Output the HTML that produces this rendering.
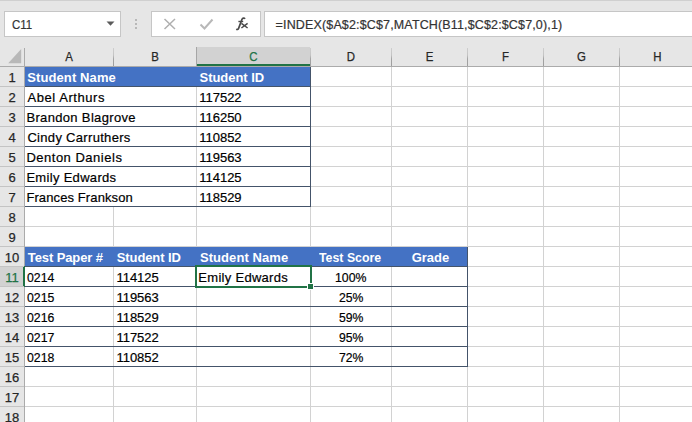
<!DOCTYPE html>
<html><head><meta charset="utf-8"><style>
html,body{margin:0;padding:0;}
body{width:692px;height:422px;overflow:hidden;position:relative;background:#E6E6E6;font-family:"Liberation Sans", sans-serif;}
body>div,body>svg{position:absolute;}
.t{white-space:nowrap;}
</style></head><body>
<div style="left:0px;top:0px;width:692px;height:1px;background:#D0D0D0"></div>
<div style="left:4px;top:11px;width:117px;height:26px;background:#fff;border:1px solid #C6C6C6;box-sizing:border-box"></div>
<svg style="position:absolute;left:106px;top:21px" width="9" height="6"><path d="M0.5 0.5 L8.5 0.5 L4.5 4.8 Z" fill="#5a5a5a"/></svg>
<div style="left:135px;top:19px;width:2px;height:2px;background:#A8A8A8;border-radius:1px"></div>
<div style="left:135px;top:23px;width:2px;height:2px;background:#A8A8A8;border-radius:1px"></div>
<div style="left:135px;top:27px;width:2px;height:2px;background:#A8A8A8;border-radius:1px"></div>
<div style="left:151px;top:11px;width:110px;height:26px;background:#fff;border:1px solid #C6C6C6;box-sizing:border-box"></div>
<svg style="position:absolute;left:163px;top:18px" width="14" height="12"><path d="M1.5 1 L12 11 M12 1 L1.5 11" stroke="#AFAFAF" stroke-width="1.5" fill="none"/></svg>
<svg style="position:absolute;left:199px;top:18px" width="15" height="13"><path d="M1.5 6.5 L5.5 10.5 L13.5 1.5" stroke="#B8B8B8" stroke-width="2" fill="none"/></svg>
<svg style="position:absolute;left:234px;top:16px" width="16" height="15"><path d="M11 2.9 C10.4 1.9 8.6 1.7 7.9 3.5 L4.6 12.4 C4.1 13.5 3.2 13.7 2.2 13.2" stroke="#4a4a4a" stroke-width="1.7" fill="none"/><path d="M4.4 5.5 L9.2 5.5" stroke="#4a4a4a" stroke-width="1.4"/><path d="M7.4 7.4 L13.6 12 M13.6 7.4 L7.4 12" stroke="#4a4a4a" stroke-width="1.5"/></svg>
<div style="left:264px;top:11px;width:440px;height:26px;background:#fff;border:1px solid #C6C6C6;box-sizing:border-box"></div>
<div style="left:0px;top:47px;width:692px;height:19px;background:#E6E6E6"></div>
<svg style="position:absolute;left:8px;top:49px" width="14" height="15"><path d="M13.2 0 L13.2 14.2 L0.2 14.2 Z" fill="#B8B8B8"/></svg>
<div style="left:197px;top:47px;width:113px;height:19px;background:#D2D2D2"></div>
<div style="left:113px;top:48px;width:1px;height:18px;background:linear-gradient(#CDCDCD,#C4C4C4 40%,#A3A3A3 60%,#9E9E9E)"></div>
<div style="left:196px;top:47px;width:1px;height:19px;background:#A6A6A6"></div>
<div style="left:310px;top:48px;width:1px;height:18px;background:linear-gradient(#CDCDCD,#C4C4C4 40%,#A3A3A3 60%,#9E9E9E)"></div>
<div style="left:391px;top:48px;width:1px;height:18px;background:linear-gradient(#CDCDCD,#C4C4C4 40%,#A3A3A3 60%,#9E9E9E)"></div>
<div style="left:467px;top:48px;width:1px;height:18px;background:linear-gradient(#CDCDCD,#C4C4C4 40%,#A3A3A3 60%,#9E9E9E)"></div>
<div style="left:543px;top:48px;width:1px;height:18px;background:linear-gradient(#CDCDCD,#C4C4C4 40%,#A3A3A3 60%,#9E9E9E)"></div>
<div style="left:619px;top:48px;width:1px;height:18px;background:linear-gradient(#CDCDCD,#C4C4C4 40%,#A3A3A3 60%,#9E9E9E)"></div>
<div style="left:695px;top:48px;width:1px;height:18px;background:linear-gradient(#CDCDCD,#C4C4C4 40%,#A3A3A3 60%,#9E9E9E)"></div>
<div style="left:0px;top:66px;width:692px;height:1px;background:#ABABAB"></div>
<div style="left:197px;top:64px;width:113px;height:2px;background:#217346"></div>
<div class="t" style="left:25px;top:47px;width:88px;text-align:center;font-size:13px;line-height:19px;color:#262626;-webkit-text-stroke:0.25px #262626;transform:scaleX(0.88)">A</div>
<div class="t" style="left:114px;top:47px;width:82px;text-align:center;font-size:13px;line-height:19px;color:#262626;-webkit-text-stroke:0.25px #262626;transform:scaleX(0.88)">B</div>
<div class="t" style="left:197px;top:47px;width:113px;text-align:center;font-size:13px;line-height:19px;color:#217346;-webkit-text-stroke:0.25px #217346;transform:scaleX(0.88)">C</div>
<div class="t" style="left:311px;top:47px;width:80px;text-align:center;font-size:13px;line-height:19px;color:#262626;-webkit-text-stroke:0.25px #262626;transform:scaleX(0.88)">D</div>
<div class="t" style="left:392px;top:47px;width:75px;text-align:center;font-size:13px;line-height:19px;color:#262626;-webkit-text-stroke:0.25px #262626;transform:scaleX(0.88)">E</div>
<div class="t" style="left:468px;top:47px;width:75px;text-align:center;font-size:13px;line-height:19px;color:#262626;-webkit-text-stroke:0.25px #262626;transform:scaleX(0.88)">F</div>
<div class="t" style="left:544px;top:47px;width:75px;text-align:center;font-size:13px;line-height:19px;color:#262626;-webkit-text-stroke:0.25px #262626;transform:scaleX(0.88)">G</div>
<div class="t" style="left:620px;top:47px;width:75px;text-align:center;font-size:13px;line-height:19px;color:#262626;-webkit-text-stroke:0.25px #262626;transform:scaleX(0.88)">H</div>
<div style="left:25px;top:67px;width:667px;height:355px;background:#fff"></div>
<div style="left:0px;top:67px;width:24px;height:355px;background:#E6E6E6"></div>
<div style="left:24px;top:48px;width:1px;height:374px;background:#ABABAB"></div>
<div style="left:0px;top:267px;width:23px;height:19px;background:#D2D2D2"></div>
<div style="left:23px;top:266px;width:2px;height:21px;background:#217346"></div>
<div style="left:0px;top:86px;width:24px;height:1px;background:#C4C4C4"></div>
<div class="t" style="left:0px;top:68px;width:24px;text-align:center;font-size:13px;line-height:19px;color:#262626;-webkit-text-stroke:0.25px #262626">1</div>
<div style="left:0px;top:106px;width:24px;height:1px;background:#C4C4C4"></div>
<div class="t" style="left:0px;top:88px;width:24px;text-align:center;font-size:13px;line-height:19px;color:#262626;-webkit-text-stroke:0.25px #262626">2</div>
<div style="left:0px;top:126px;width:24px;height:1px;background:#C4C4C4"></div>
<div class="t" style="left:0px;top:108px;width:24px;text-align:center;font-size:13px;line-height:19px;color:#262626;-webkit-text-stroke:0.25px #262626">3</div>
<div style="left:0px;top:146px;width:24px;height:1px;background:#C4C4C4"></div>
<div class="t" style="left:0px;top:128px;width:24px;text-align:center;font-size:13px;line-height:19px;color:#262626;-webkit-text-stroke:0.25px #262626">4</div>
<div style="left:0px;top:166px;width:24px;height:1px;background:#C4C4C4"></div>
<div class="t" style="left:0px;top:148px;width:24px;text-align:center;font-size:13px;line-height:19px;color:#262626;-webkit-text-stroke:0.25px #262626">5</div>
<div style="left:0px;top:186px;width:24px;height:1px;background:#C4C4C4"></div>
<div class="t" style="left:0px;top:168px;width:24px;text-align:center;font-size:13px;line-height:19px;color:#262626;-webkit-text-stroke:0.25px #262626">6</div>
<div style="left:0px;top:206px;width:24px;height:1px;background:#C4C4C4"></div>
<div class="t" style="left:0px;top:188px;width:24px;text-align:center;font-size:13px;line-height:19px;color:#262626;-webkit-text-stroke:0.25px #262626">7</div>
<div style="left:0px;top:226px;width:24px;height:1px;background:#C4C4C4"></div>
<div class="t" style="left:0px;top:208px;width:24px;text-align:center;font-size:13px;line-height:19px;color:#262626;-webkit-text-stroke:0.25px #262626">8</div>
<div style="left:0px;top:246px;width:24px;height:1px;background:#C4C4C4"></div>
<div class="t" style="left:0px;top:228px;width:24px;text-align:center;font-size:13px;line-height:19px;color:#262626;-webkit-text-stroke:0.25px #262626">9</div>
<div style="left:0px;top:266px;width:24px;height:1px;background:#C4C4C4"></div>
<div class="t" style="left:0px;top:248px;width:24px;text-align:center;font-size:13px;line-height:19px;color:#262626;-webkit-text-stroke:0.25px #262626">10</div>
<div style="left:0px;top:286px;width:24px;height:1px;background:#C4C4C4"></div>
<div class="t" style="left:0px;top:268px;width:24px;text-align:center;font-size:13px;line-height:19px;color:#217346;-webkit-text-stroke:0.25px #217346">11</div>
<div style="left:0px;top:306px;width:24px;height:1px;background:#C4C4C4"></div>
<div class="t" style="left:0px;top:288px;width:24px;text-align:center;font-size:13px;line-height:19px;color:#262626;-webkit-text-stroke:0.25px #262626">12</div>
<div style="left:0px;top:326px;width:24px;height:1px;background:#C4C4C4"></div>
<div class="t" style="left:0px;top:308px;width:24px;text-align:center;font-size:13px;line-height:19px;color:#262626;-webkit-text-stroke:0.25px #262626">13</div>
<div style="left:0px;top:346px;width:24px;height:1px;background:#C4C4C4"></div>
<div class="t" style="left:0px;top:328px;width:24px;text-align:center;font-size:13px;line-height:19px;color:#262626;-webkit-text-stroke:0.25px #262626">14</div>
<div style="left:0px;top:366px;width:24px;height:1px;background:#C4C4C4"></div>
<div class="t" style="left:0px;top:348px;width:24px;text-align:center;font-size:13px;line-height:19px;color:#262626;-webkit-text-stroke:0.25px #262626">15</div>
<div style="left:0px;top:386px;width:24px;height:1px;background:#C4C4C4"></div>
<div class="t" style="left:0px;top:368px;width:24px;text-align:center;font-size:13px;line-height:19px;color:#262626;-webkit-text-stroke:0.25px #262626">16</div>
<div style="left:0px;top:406px;width:24px;height:1px;background:#C4C4C4"></div>
<div class="t" style="left:0px;top:388px;width:24px;text-align:center;font-size:13px;line-height:19px;color:#262626;-webkit-text-stroke:0.25px #262626">17</div>
<div style="left:0px;top:426px;width:24px;height:1px;background:#C4C4C4"></div>
<div class="t" style="left:0px;top:408px;width:24px;text-align:center;font-size:13px;line-height:19px;color:#262626;-webkit-text-stroke:0.25px #262626">18</div>
<div style="left:113px;top:67px;width:1px;height:20px;background:#D2D2D2"></div>
<div style="left:113px;top:207px;width:1px;height:215px;background:#D2D2D2"></div>
<div style="left:196px;top:67px;width:1px;height:355px;background:#D2D2D2"></div>
<div style="left:310px;top:67px;width:1px;height:355px;background:#D2D2D2"></div>
<div style="left:391px;top:67px;width:1px;height:355px;background:#D2D2D2"></div>
<div style="left:467px;top:67px;width:1px;height:355px;background:#D2D2D2"></div>
<div style="left:543px;top:67px;width:1px;height:355px;background:#D2D2D2"></div>
<div style="left:619px;top:67px;width:1px;height:355px;background:#D2D2D2"></div>
<div style="left:695px;top:67px;width:1px;height:355px;background:#D2D2D2"></div>
<div style="left:25px;top:86px;width:667px;height:1px;background:#D2D2D2"></div>
<div style="left:25px;top:106px;width:667px;height:1px;background:#D2D2D2"></div>
<div style="left:25px;top:126px;width:667px;height:1px;background:#D2D2D2"></div>
<div style="left:25px;top:146px;width:667px;height:1px;background:#D2D2D2"></div>
<div style="left:25px;top:166px;width:667px;height:1px;background:#D2D2D2"></div>
<div style="left:25px;top:186px;width:667px;height:1px;background:#D2D2D2"></div>
<div style="left:25px;top:206px;width:667px;height:1px;background:#D2D2D2"></div>
<div style="left:25px;top:226px;width:667px;height:1px;background:#D2D2D2"></div>
<div style="left:25px;top:246px;width:667px;height:1px;background:#D2D2D2"></div>
<div style="left:25px;top:266px;width:667px;height:1px;background:#D2D2D2"></div>
<div style="left:25px;top:286px;width:667px;height:1px;background:#D2D2D2"></div>
<div style="left:25px;top:306px;width:667px;height:1px;background:#D2D2D2"></div>
<div style="left:25px;top:326px;width:667px;height:1px;background:#D2D2D2"></div>
<div style="left:25px;top:346px;width:667px;height:1px;background:#D2D2D2"></div>
<div style="left:25px;top:366px;width:667px;height:1px;background:#D2D2D2"></div>
<div style="left:25px;top:386px;width:667px;height:1px;background:#D2D2D2"></div>
<div style="left:25px;top:406px;width:667px;height:1px;background:#D2D2D2"></div>
<div style="left:25px;top:426px;width:667px;height:1px;background:#D2D2D2"></div>
<div style="left:25px;top:67px;width:285px;height:19px;background:#4472C4"></div>
<div style="left:25px;top:86px;width:286px;height:1px;background:#44546A"></div>
<div style="left:25px;top:106px;width:286px;height:1px;background:#44546A"></div>
<div style="left:25px;top:126px;width:286px;height:1px;background:#44546A"></div>
<div style="left:25px;top:146px;width:286px;height:1px;background:#44546A"></div>
<div style="left:25px;top:166px;width:286px;height:1px;background:#44546A"></div>
<div style="left:25px;top:186px;width:286px;height:1px;background:#44546A"></div>
<div style="left:25px;top:206px;width:286px;height:1px;background:#44546A"></div>
<div style="left:310px;top:67px;width:1px;height:140px;background:#44546A"></div>
<div style="left:25px;top:247px;width:442px;height:19px;background:#4472C4"></div>
<div style="left:25px;top:266px;width:443px;height:1px;background:#44546A"></div>
<div style="left:25px;top:286px;width:443px;height:1px;background:#44546A"></div>
<div style="left:25px;top:306px;width:443px;height:1px;background:#44546A"></div>
<div style="left:25px;top:326px;width:443px;height:1px;background:#44546A"></div>
<div style="left:25px;top:346px;width:443px;height:1px;background:#44546A"></div>
<div style="left:25px;top:366px;width:443px;height:1px;background:#44546A"></div>
<div style="left:467px;top:247px;width:1px;height:120px;background:#44546A"></div>
<div class="t" style="left:11.80px;top:13px;line-height:24px;letter-spacing:0.000px;transform:scaleX(0.9182);transform-origin:0 0;font-size:12.5px;color:#333;-webkit-text-stroke:0.2px #333;">C11</div>
<div class="t" style="left:275.60px;top:13px;line-height:24px;letter-spacing:0.146px;font-size:12.5px;color:#333;-webkit-text-stroke:0.2px #333;">=INDEX($A$2:$C$7,MATCH(B11,$C$2:$C$7,0),1)</div>
<div class="t" style="left:27.20px;top:68px;line-height:20px;letter-spacing:0.109px;font-size:13px;font-weight:bold;color:#fff;">Student Name</div>
<div class="t" style="left:199.50px;top:68px;line-height:20px;letter-spacing:-0.033px;font-size:13px;font-weight:bold;color:#fff;">Student ID</div>
<div class="t" style="left:27.40px;top:88px;line-height:20px;letter-spacing:0.573px;font-size:13px;-webkit-text-stroke:0.2px #000;color:#000;">Abel Arthurs</div>
<div class="t" style="left:199.20px;top:88px;line-height:20px;letter-spacing:0.000px;font-size:13px;-webkit-text-stroke:0.2px #000;color:#000;">117522</div>
<div class="t" style="left:26.40px;top:108px;line-height:20px;letter-spacing:0.340px;font-size:13px;-webkit-text-stroke:0.2px #000;color:#000;">Brandon Blagrove</div>
<div class="t" style="left:199.20px;top:108px;line-height:20px;letter-spacing:0.000px;font-size:13px;-webkit-text-stroke:0.2px #000;color:#000;">116250</div>
<div class="t" style="left:27.40px;top:128px;line-height:20px;letter-spacing:0.313px;font-size:13px;-webkit-text-stroke:0.2px #000;color:#000;">Cindy Carruthers</div>
<div class="t" style="left:199.20px;top:128px;line-height:20px;letter-spacing:0.000px;font-size:13px;-webkit-text-stroke:0.2px #000;color:#000;">110852</div>
<div class="t" style="left:26.40px;top:148px;line-height:20px;letter-spacing:0.508px;font-size:13px;-webkit-text-stroke:0.2px #000;color:#000;">Denton Daniels</div>
<div class="t" style="left:199.20px;top:148px;line-height:20px;letter-spacing:0.000px;font-size:13px;-webkit-text-stroke:0.2px #000;color:#000;">119563</div>
<div class="t" style="left:26.40px;top:168px;line-height:20px;letter-spacing:0.308px;font-size:13px;-webkit-text-stroke:0.2px #000;color:#000;">Emily Edwards</div>
<div class="t" style="left:199.20px;top:168px;line-height:20px;letter-spacing:0.000px;font-size:13px;-webkit-text-stroke:0.2px #000;color:#000;">114125</div>
<div class="t" style="left:26.40px;top:188px;line-height:20px;letter-spacing:0.107px;font-size:13px;-webkit-text-stroke:0.2px #000;color:#000;">Frances Frankson</div>
<div class="t" style="left:199.20px;top:188px;line-height:20px;letter-spacing:0.000px;font-size:13px;-webkit-text-stroke:0.2px #000;color:#000;">118529</div>
<div class="t" style="left:27.80px;top:248px;line-height:20px;letter-spacing:-0.100px;font-size:13px;font-weight:bold;color:#fff;">Test Paper #</div>
<div class="t" style="left:116.80px;top:248px;line-height:20px;letter-spacing:-0.111px;font-size:13px;font-weight:bold;color:#fff;">Student ID</div>
<div class="t" style="left:199.90px;top:248px;line-height:20px;letter-spacing:0.082px;font-size:13px;font-weight:bold;color:#fff;">Student Name</div>
<div class="t" style="left:318.80px;top:248px;line-height:20px;letter-spacing:0.000px;transform:scaleX(0.9492);transform-origin:0 0;font-size:13px;font-weight:bold;color:#fff;">Test Score</div>
<div class="t" style="left:411.70px;top:248px;line-height:20px;letter-spacing:0.000px;font-size:13px;font-weight:bold;color:#fff;">Grade</div>
<div class="t" style="left:27.20px;top:268px;line-height:20px;letter-spacing:0.000px;transform:scaleX(0.9448);transform-origin:0 0;font-size:13px;-webkit-text-stroke:0.2px #000;color:#000;">0214</div>
<div class="t" style="left:116.40px;top:268px;line-height:20px;letter-spacing:0.000px;font-size:13px;-webkit-text-stroke:0.2px #000;color:#000;">114125</div>
<div class="t" style="left:334.75px;top:268px;line-height:20px;letter-spacing:0.000px;transform:scaleX(0.9469);transform-origin:0 0;font-size:13px;-webkit-text-stroke:0.2px #000;color:#000;">100%</div>
<div class="t" style="left:27.20px;top:288px;line-height:20px;letter-spacing:0.000px;transform:scaleX(0.9448);transform-origin:0 0;font-size:13px;-webkit-text-stroke:0.2px #000;color:#000;">0215</div>
<div class="t" style="left:116.40px;top:288px;line-height:20px;letter-spacing:0.000px;font-size:13px;-webkit-text-stroke:0.2px #000;color:#000;">119563</div>
<div class="t" style="left:339.00px;top:288px;line-height:20px;letter-spacing:0.000px;transform:scaleX(0.9385);transform-origin:0 0;font-size:13px;-webkit-text-stroke:0.2px #000;color:#000;">25%</div>
<div class="t" style="left:27.20px;top:308px;line-height:20px;letter-spacing:0.000px;transform:scaleX(0.9448);transform-origin:0 0;font-size:13px;-webkit-text-stroke:0.2px #000;color:#000;">0216</div>
<div class="t" style="left:116.40px;top:308px;line-height:20px;letter-spacing:0.000px;font-size:13px;-webkit-text-stroke:0.2px #000;color:#000;">118529</div>
<div class="t" style="left:339.00px;top:308px;line-height:20px;letter-spacing:0.000px;transform:scaleX(0.9385);transform-origin:0 0;font-size:13px;-webkit-text-stroke:0.2px #000;color:#000;">59%</div>
<div class="t" style="left:27.20px;top:328px;line-height:20px;letter-spacing:0.000px;transform:scaleX(0.9448);transform-origin:0 0;font-size:13px;-webkit-text-stroke:0.2px #000;color:#000;">0217</div>
<div class="t" style="left:116.40px;top:328px;line-height:20px;letter-spacing:0.000px;font-size:13px;-webkit-text-stroke:0.2px #000;color:#000;">117522</div>
<div class="t" style="left:339.00px;top:328px;line-height:20px;letter-spacing:0.000px;transform:scaleX(0.9385);transform-origin:0 0;font-size:13px;-webkit-text-stroke:0.2px #000;color:#000;">95%</div>
<div class="t" style="left:27.20px;top:348px;line-height:20px;letter-spacing:0.000px;transform:scaleX(0.9448);transform-origin:0 0;font-size:13px;-webkit-text-stroke:0.2px #000;color:#000;">0218</div>
<div class="t" style="left:116.40px;top:348px;line-height:20px;letter-spacing:0.000px;font-size:13px;-webkit-text-stroke:0.2px #000;color:#000;">110852</div>
<div class="t" style="left:339.00px;top:348px;line-height:20px;letter-spacing:0.000px;transform:scaleX(0.9385);transform-origin:0 0;font-size:13px;-webkit-text-stroke:0.2px #000;color:#000;">72%</div>
<div class="t" style="left:198.30px;top:268px;line-height:20px;letter-spacing:0.292px;font-size:13px;-webkit-text-stroke:0.2px #000;color:#000;">Emily Edwards</div>
<div style="left:195px;top:265px;width:117px;height:2px;background:#217346"></div>
<div style="left:195px;top:286px;width:117px;height:2px;background:#217346"></div>
<div style="left:195px;top:265px;width:2px;height:23px;background:#217346"></div>
<div style="left:310px;top:265px;width:2px;height:20px;background:#217346"></div>
<div style="left:307px;top:283px;width:7px;height:7px;background:#fff"></div>
<div style="left:308px;top:284px;width:5px;height:5px;background:#217346"></div>
</body></html>
